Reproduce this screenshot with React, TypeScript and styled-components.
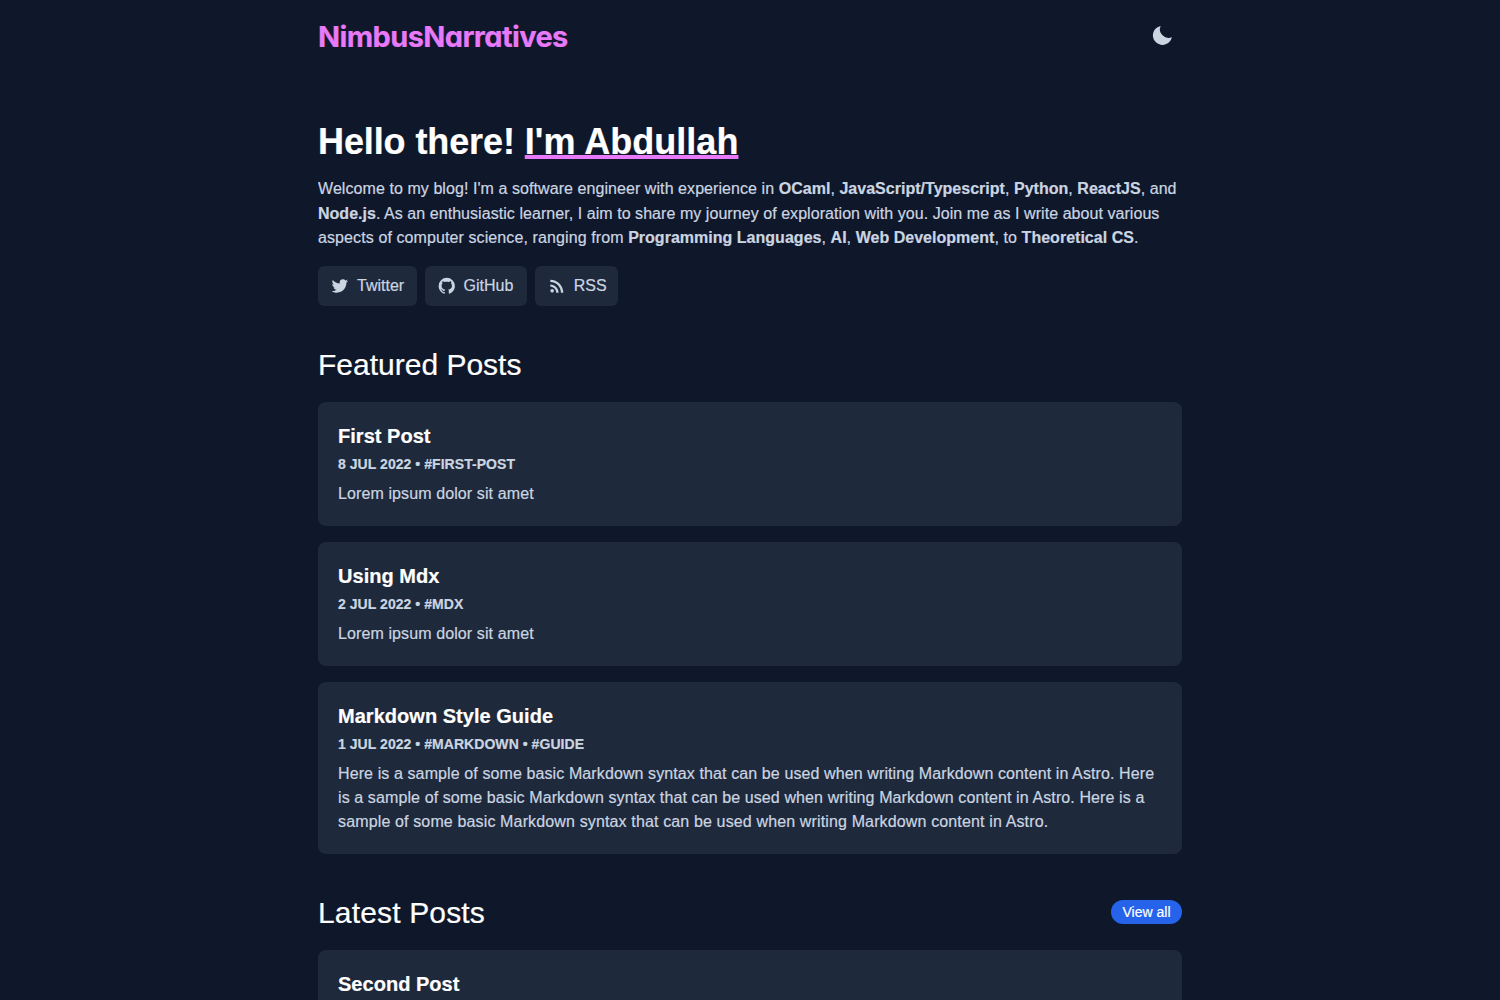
import React from "react";
import styled, { createGlobalStyle } from "styled-components";
import { BiLogoTwitter, BiSolidMoon } from "react-icons/bi";
import { MdRssFeed } from "react-icons/md";

const Global = createGlobalStyle`
  * { box-sizing: border-box; margin: 0; padding: 0; }
  body {
    background: #0f172a;
    color: #cbd5e1;
    font: 16px/24px "Liberation Sans", Arial, sans-serif;
    -webkit-text-stroke: 0.2px currentColor;
  }
  a { color: inherit; text-decoration: none; }
`;

const Page = styled.div`
  width: 864px;
  height: 1000px;
  margin: 0 auto;
  overflow: hidden;
`;

const Header = styled.header`
  display: flex;
  justify-content: space-between;
  align-items: center;
  height: 72px;
  padding-right: 8px;
`;

const Logo = styled.a`
  && { color: #e879f9; }
  margin-top: 2px;
  font: 700 29px/36px Inter, sans-serif;
  font-feature-settings: "cv11" 1;
  letter-spacing: -0.62px;
  white-space: nowrap;
`;

const ThemeButton = styled.button`
  display: flex;
  margin-top: -1px;
  border: 0;
  background: none;
  color: #cbd5e1;
  font-size: 23px;
`;

const Hero = styled.section`
  padding-top: 50px;
`;

const Greeting = styled.h1`
  font-size: 36px;
  line-height: 40px;
  color: #fff;
  white-space: nowrap;
  letter-spacing: -0.1px;
`;

const Name = styled.span`
  letter-spacing: 0.04px;
  text-decoration: underline;
  text-decoration-color: #e879f9;
  text-decoration-thickness: 3.5px;
  text-underline-offset: 1px;
  text-decoration-skip-ink: none;
`;

const Intro = styled.p`
  margin-top: 15px;
  line-height: 24.5px;
`;

const Line = styled.span<{ $spacing?: number }>`
  display: block;
  white-space: nowrap;
  letter-spacing: ${(p) => (p.$spacing === undefined ? "inherit" : `${p.$spacing}px`)};
  b { letter-spacing: 0.02px; }
`;

const Links = styled.nav`
  display: flex;
  gap: 8px;
  margin-top: 15px;
`;

const LinkButton = styled.a<{ $width: number }>`
  display: flex;
  align-items: center;
  gap: 7px;
  width: ${(p) => p.$width}px;
  height: 40px;
  padding-left: 12px;
  border-radius: 6px;
  background: #1e293b;
  white-space: nowrap;
  svg { flex: none; width: 20px; height: 20px; }
`;

const SectionHead = styled.div`
  display: flex;
  justify-content: space-between;
  align-items: center;
  height: 36px;
  margin: 41.5px 0 18.5px;
`;

const SectionTitle = styled.h2<{ $spacing?: number }>`
  font-size: 30px;
  line-height: 36px;
  font-weight: 400;
  color: #fff;
  letter-spacing: ${(p) => p.$spacing ?? 0}px;
`;

const ViewAll = styled.a`
  width: 71px;
  height: 24px;
  margin-top: -3px;
  border-radius: 12px;
  background: #2563eb;
  && { color: #fff; }
  font-size: 14px;
  line-height: 25px;
  text-align: center;
`;

const Posts = styled.div`
  display: flex;
  flex-direction: column;
  gap: 16px;
`;

const Card = styled.article`
  padding: 20px;
  border-radius: 8px;
  background: #1e293b;
`;

const PostTitle = styled.h3`
  font-size: 20px;
  line-height: 28px;
  color: #fff;
  letter-spacing: 0.03px;
`;

const Meta = styled.p`
  margin-top: 4px;
  font-size: 14px;
  line-height: 20px;
  font-weight: 700;
  text-transform: uppercase;
  letter-spacing: 0.05px;
`;

const Description = styled.p`
  margin-top: 8px;
  letter-spacing: 0.105px;
`;

type Post = { title: string; meta?: string; lines?: string[] };

const featured: Post[] = [
  { title: "First Post", meta: "8 Jul 2022 • #first-post", lines: ["Lorem ipsum dolor sit amet"] },
  { title: "Using Mdx", meta: "2 Jul 2022 • #mdx", lines: ["Lorem ipsum dolor sit amet"] },
  {
    title: "Markdown Style Guide",
    meta: "1 Jul 2022 • #markdown • #guide",
    lines: [
      "Here is a sample of some basic Markdown syntax that can be used when writing Markdown content in Astro. Here",
      "is a sample of some basic Markdown syntax that can be used when writing Markdown content in Astro. Here is a",
      "sample of some basic Markdown syntax that can be used when writing Markdown content in Astro.",
    ],
  },
];

const latest: Post[] = [{ title: "Second Post" }];

function GithubIcon() {
  return (
    <svg viewBox="0 -0.3 24.6 24.6" fill="currentColor" aria-hidden="true">
      <path d="M12 2A10 10 0 0 0 2 12c0 4.42 2.87 8.17 6.84 9.5.5.08.66-.23.66-.5v-1.69c-2.77.6-3.36-1.34-3.36-1.34-.46-1.16-1.11-1.47-1.11-1.47-.91-.62.07-.6.07-.6 1 .07 1.53 1.03 1.53 1.03.87 1.52 2.34 1.07 2.91.83.09-.65.35-1.09.63-1.34-2.22-.25-4.55-1.11-4.55-4.92 0-1.11.38-2 1.03-2.71-.1-.25-.45-1.29.1-2.64 0 0 .84-.27 2.75 1.02.79-.22 1.65-.33 2.5-.33s1.71.11 2.5.33c1.91-1.29 2.75-1.02 2.75-1.02.55 1.35.2 2.39.1 2.64.65.71 1.03 1.6 1.03 2.71 0 3.82-2.34 4.66-4.57 4.91.36.31.69.92.69 1.85V21c0 .27.16.59.67.5C19.14 20.16 22 16.42 22 12A10 10 0 0 0 12 2Z" />
    </svg>
  );
}

function PostList({ posts }: { posts: Post[] }) {
  return (
    <Posts>
      {posts.map((post) => (
        <Card key={post.title}>
          <PostTitle>{post.title}</PostTitle>
          {post.meta && <Meta>{post.meta}</Meta>}
          {post.lines && (
            <Description>
              {post.lines.map((line, i) => (
                <Line key={line} $spacing={i === 2 ? 0.14 : undefined}>{line}</Line>
              ))}
            </Description>
          )}
        </Card>
      ))}
    </Posts>
  );
}

export default function App() {
  return (
    <>
      <Global />
      <Page>
        <Header>
          <Logo href="#">NimbusNarratives</Logo>
          <ThemeButton aria-label="Toggle theme"><BiSolidMoon /></ThemeButton>
        </Header>
        <Hero>
          <Greeting>Hello there! <Name>I'm Abdullah</Name></Greeting>
          <Intro>
            <Line $spacing={0.07}>Welcome to my blog! I'm a software engineer with experience in <b>OCaml</b>, <b>JavaScript/Typescript</b>, <b>Python</b>, <b>ReactJS</b>, and</Line>
            <Line $spacing={0.055}><b>Node.js</b>. As an enthusiastic learner, I aim to share my journey of exploration with you. Join me as I write about various</Line>
            <Line $spacing={0.1}>aspects of computer science, ranging from <b>Programming Languages</b>, <b>AI</b>, <b>Web Development</b>, to <b>Theoretical CS</b>.</Line>
          </Intro>
          <Links>
            <LinkButton href="#" $width={98.5}><BiLogoTwitter />Twitter</LinkButton>
            <LinkButton href="#" $width={102.3}><GithubIcon />GitHub</LinkButton>
            <LinkButton href="#" $width={83.2}><MdRssFeed />RSS</LinkButton>
          </Links>
        </Hero>
        <SectionHead><SectionTitle>Featured Posts</SectionTitle></SectionHead>
        <PostList posts={featured} />
        <SectionHead>
          <SectionTitle $spacing={0.16}>Latest Posts</SectionTitle>
          <ViewAll href="#">View all</ViewAll>
        </SectionHead>
        <PostList posts={latest} />
      </Page>
    </>
  );
}
